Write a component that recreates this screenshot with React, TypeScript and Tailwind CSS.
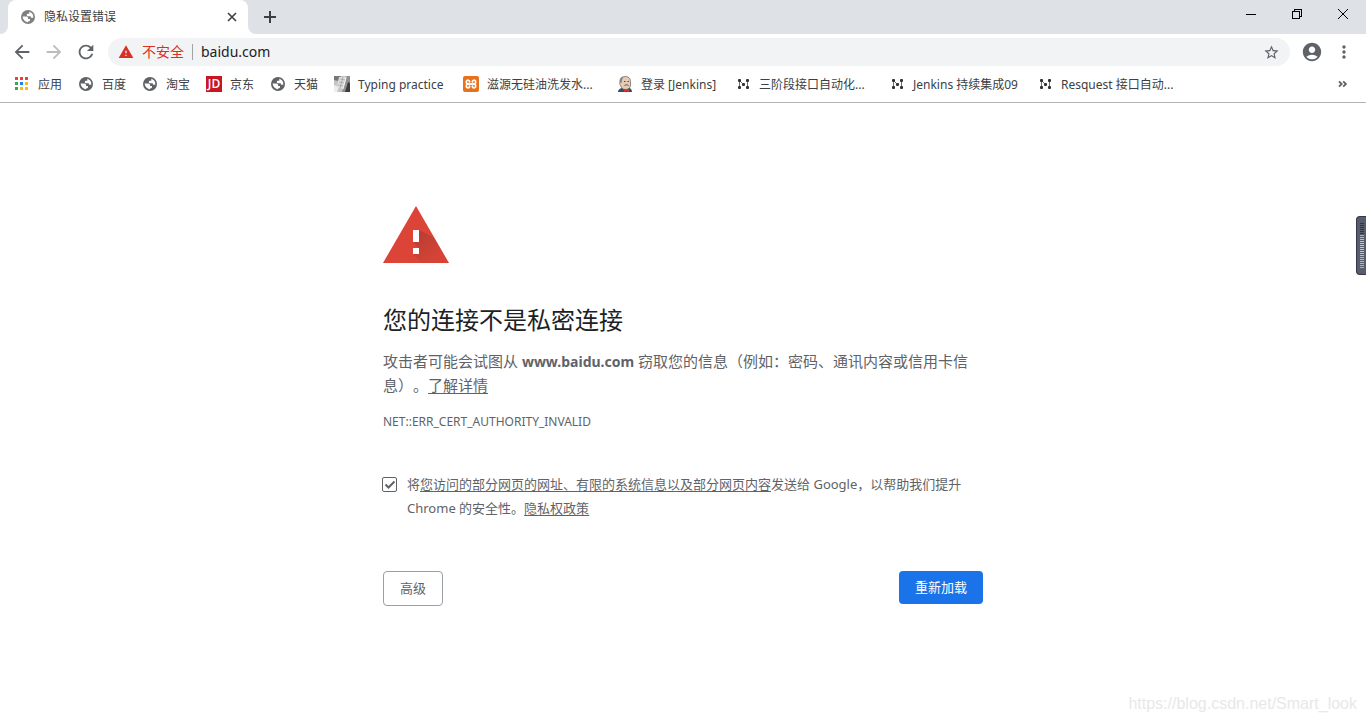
import type { ReactNode } from 'react';
import {
  MdAccountCircle,
  MdArrowBack,
  MdArrowForward,
  MdMoreVert,
  MdRefresh,
  MdStarBorder,
  MdWarning,
} from 'react-icons/md';

function Globe({ className }: { className: string }) {
  return (
    <svg viewBox="0 0 16 16" className={className} aria-hidden="true">
      <circle cx="8" cy="8" r="7" fill="currentColor" />
      <path
        d="M2.700 7.600h3.300c1.400 0 2.100.6 2.100 1.600v.7h1c.8 0 1 .5 1 1 0 .9-.8 1.200-1.700 1.300l-.5 1c-2.800-.2-5.200-2.700-5.200-5.600z"
        fill="#fff"
      />
      <path
        d="M9.300 2.800c2.300.5 4 2.600 4 5 0 .4 0 .7-.1 1h-1.400c-.7 0-1-.4-1-1v-.5H8.800c-1.200 0-2-.5-2-1.300 0-.9.6-1.300 1.500-1.300h1z"
        fill="#fff"
      />
    </svg>
  );
}

function Apps() {
  const colors = ['#ea4335', '#ea4335', '#ea4335', '#34a853', '#1a83f0', '#fbbc05', '#34a853', '#fbbc05', '#fbbc05'];
  return (
    <svg viewBox="0 0 16 16" className="size-4" shapeRendering="crispEdges" aria-hidden="true">
      {colors.map((c, i) => (
        <rect key={i} x={1 + (i % 3) * 5} y={1 + Math.floor(i / 3) * 5} width="3" height="3" fill={c} />
      ))}
    </svg>
  );
}

function JdIcon() {
  return (
    <span className="grid size-4 place-items-center bg-[#c81623] font-['Open_Sans','Noto_Sans',sans-serif] text-[12px] leading-4 font-semibold text-white">
      JD
    </span>
  );
}

function KeyboardIcon() {
  return (
    <svg viewBox="0 0 16 16" className="size-4" aria-hidden="true">
      <rect width="16" height="16" fill="#c4c4c4" />
      <path d="M0 0h7L4 5 0 4z" fill="#777" />
      <path d="M0 16V9l5 2-2 5z" fill="#ededed" />
      <path d="M5 1h7l-3 12-6-2z" fill="#dedede" />
      <path d="M6 3l5 1M5 6l5 1M4 9l5 1M9 1 6 12" stroke="#9c9c9c" strokeWidth=".7" />
      <path d="M13 0h3v7l-4 9h-4z" fill="#8f8f8f" />
      <path d="M14 6l2 1v9h-5z" fill="#3c3c3c" />
      <path d="M12 2l-3 11" stroke="#f5f5f5" />
    </svg>
  );
}

function XamppIcon() {
  return (
    <svg viewBox="0 0 16 16" className="size-4" aria-hidden="true">
      <rect width="16" height="16" rx="2" fill="#e8711c" />
      <g fill="none" stroke="#fff" strokeWidth="1.700" strokeLinecap="round">
        <path d="M6.600 6C6.800 4 3.300 3.300 3.300 5.900 3.300 7.200 4.300 8 5.500 8h5c1.200 0 2.200-.8 2.200-2.100C12.700 3.300 9.200 4 9.400 6" />
        <path d="M6.600 10c.2 2-3.300 2.700-3.300.1C3.300 8.800 4.300 8 5.500 8h5c1.200 0 2.200.8 2.200 2.100 0 2.600-3.500 1.900-3.300-.1" />
      </g>
    </svg>
  );
}

function JenkinsIcon() {
  return (
    <svg viewBox="0 0 16 16" className="size-4" aria-hidden="true">
      <path d="M1 16c0-2 1.500-3.500 4-4l6-.5c2.500.5 4 2 4 4.500z" fill="#335061" />
      <path d="M3 5C3 2 5 .5 8.300.5c3.500 0 5.200 2 5.200 5v3.500c0 2.500-2 4.500-5 4.500S4 11.500 3.500 9C2.300 8.500 2.500 7 3 6.500z" fill="#e5cbb5" stroke="#6b5f58" strokeWidth=".7" />
      <path d="M2.700 6.500C2.500 3 4 1 6.500.7L5 4l-.5 3z" fill="#8a837b" />
      <path d="M7 5.500h1.500M10.500 5.500H12M7.500 9.500c1.500-1 3-.8 4 .1" stroke="#4b3b34" strokeWidth=".9" fill="none" />
      <path d="M7 13l2.500.8L12 13v3l-2.500-1L7 16z" fill="#d33833" />
    </svg>
  );
}

function NodesIcon() {
  return (
    <svg viewBox="0 0 16 16" className="size-4" fill="#333" aria-hidden="true">
      <path d="M4 4h1v8H4zM12 4h1v8h-1z" opacity=".7" />
      <rect x="3" y="3" width="3" height="3" rx="1" />
      <rect x="3" y="10" width="3" height="3" rx="1" />
      <rect x="11" y="3" width="3" height="3" rx="1" />
      <rect x="11" y="10" width="3" height="3" rx="1" />
      <rect x="7" y="7" width="3" height="3" rx="1" />
      <path d="M5 5l2.500 2.500" stroke="#333" strokeWidth=".7" />
    </svg>
  );
}

const bookmarks: { label: string; icon: ReactNode; width: string }[] = [
  { label: '应用', icon: <Apps />, width: 'w-12' },
  { label: '百度', icon: <Globe className="size-4 text-[#5f6368]" />, width: 'w-12' },
  { label: '淘宝', icon: <Globe className="size-4 text-[#5f6368]" />, width: 'w-12' },
  { label: '京东', icon: <JdIcon />, width: 'w-12' },
  { label: '天猫', icon: <Globe className="size-4 text-[#5f6368]" />, width: 'w-12' },
  { label: 'Typing practice', icon: <KeyboardIcon />, width: 'w-[113px]' },
  { label: '滋源无硅油洗发水...', icon: <XamppIcon />, width: 'w-[138px]' },
  { label: '登录 [Jenkins]', icon: <JenkinsIcon />, width: 'w-[102px]' },
  { label: '三阶段接口自动化...', icon: <NodesIcon />, width: 'w-[138px]' },
  { label: 'Jenkins 持续集成09', icon: <NodesIcon />, width: 'w-[132px]' },
  { label: 'Resquest 接口自动...', icon: <NodesIcon />, width: 'w-[138px]' },
];

function TabStrip() {
  return (
    <header className="flex h-[34px] items-stretch bg-[#dee1e6] text-[#3c4043]">
      <div className="w-2 bg-white">
        <div className="h-full rounded-br-lg bg-[#dee1e6]" />
      </div>
      <div className="flex w-60 items-center rounded-t-lg bg-white pr-2 pl-3">
        <Globe className="size-4 text-[#808080]" />
        <span className="ml-2 flex-1 text-[12px] leading-4">隐私设置错误</span>
        <button aria-label="关闭标签页" className="grid size-4 place-items-center">
          <svg viewBox="0 0 16 16" className="size-4" stroke="#3c4043" strokeWidth="1.600">
            <path d="M4 4l8 8M12 4l-8 8" />
          </svg>
        </button>
      </div>
      <div className="w-2 bg-white">
        <div className="h-full rounded-bl-lg bg-[#dee1e6]" />
      </div>
      <button aria-label="新标签页" className="grid w-7 place-items-center">
        <svg viewBox="0 0 16 16" className="size-4" stroke="#3c4043" strokeWidth="2">
          <path d="M2 8h12M8 2v12" />
        </svg>
      </button>
      <div className="ml-auto flex h-7 text-black">
        <button aria-label="最小化" className="grid w-[46px] place-items-center">
          <svg viewBox="0 0 10 10" className="size-[10px]" stroke="currentColor" shapeRendering="crispEdges">
            <path d="M0 5.500h10" />
          </svg>
        </button>
        <button aria-label="还原" className="grid w-[46px] place-items-center">
          <svg viewBox="0 0 10 10" className="size-[10px]" fill="none" stroke="currentColor" shapeRendering="crispEdges">
            <path d="M.5 2.500h7v7h-7zM2.500 2.500v-2h7v7h-2" />
          </svg>
        </button>
        <button aria-label="关闭" className="grid w-[46px] place-items-center">
          <svg viewBox="0 0 10 10" className="size-[10px]" stroke="currentColor">
            <path d="M0 0l10 10M10 0 0 10" />
          </svg>
        </button>
      </div>
    </header>
  );
}

function Toolbar() {
  return (
    <div className="flex h-9 items-center bg-white pr-3 pl-[11px] text-[#5f6368]">
      <button aria-label="后退" className="mr-[10px]">
        <MdArrowBack className="size-[22px]" />
      </button>
      <button aria-label="前进" className="mr-[10px] text-[#babcbe]">
        <MdArrowForward className="size-[22px]" />
      </button>
      <button aria-label="重新加载此页" className="mr-[11px]">
        <MdRefresh className="size-[22px]" />
      </button>
      <div className="flex h-7 flex-1 items-center rounded-full bg-[#f1f3f4] pr-[10px] pl-[10px]">
        <MdWarning className="size-4 text-[#d93025]" />
        <span className="ml-2 text-[14px] leading-5 text-[#d93025]">不安全</span>
        <span className="mx-2 h-4 w-px bg-[#a0a4a8]" />
        <input
          aria-label="地址"
          defaultValue="baidu.com"
          className="min-w-0 flex-1 bg-transparent text-[14px] leading-5 text-[#202124] outline-none"
        />
        <button aria-label="为此网页添加书签">
          <MdStarBorder className="size-[17px]" />
        </button>
      </div>
      <button aria-label="用户" className="ml-[11px]">
        <MdAccountCircle className="size-[22px]" />
      </button>
      <button aria-label="菜单" className="ml-[11px]">
        <MdMoreVert className="size-5" />
      </button>
    </div>
  );
}

function BookmarksBar() {
  return (
    <nav className="flex h-[33px] items-start border-b border-[#b4b4b4] bg-white pr-[14px] pl-[14px] text-[12px] text-[#3c4043]">
      <div className="flex flex-1 gap-4 overflow-hidden pt-[6px]">
        {bookmarks.map((b) => (
          <a key={b.label} href="#" className={`flex shrink-0 items-start gap-2 whitespace-nowrap leading-[18px] ${b.width}`}>
            <span className="shrink-0">{b.icon}</span>
            {b.label}
          </a>
        ))}
      </div>
      <button aria-label="更多书签" className="mt-[6px] grid size-4 place-items-center">
        <svg viewBox="0 0 16 16" className="size-4" fill="none" stroke="#5f6368" strokeWidth="1.800">
          <path d="M3 5.300 5.700 8 3 10.700M7.200 5.300 9.900 8l-2.700 2.700" />
        </svg>
      </button>
    </nav>
  );
}

function WarningTriangle() {
  return (
    <svg viewBox="0 0 66 57" className="h-[57px] w-[66px]" aria-hidden="true">
      <defs>
        <linearGradient id="cast" x1="30" y1="26" x2="52" y2="52" gradientUnits="userSpaceOnUse">
          <stop offset="0" stopColor="#3e2723" stopOpacity=".25" />
          <stop offset="1" stopColor="#3e2723" stopOpacity="0.03" />
        </linearGradient>
      </defs>
      <path d="M33 0l33 57H0z" fill="#db4437" />
      <path d="M36 24l15.500 8L66 57H39l-9-9 6-6-6-6z" fill="url(#cast)" />
      <path d="M30 24h6v12h-6zM30 42h6v6h-6z" fill="#fff" />
    </svg>
  );
}

function LevelMeter() {
  const bars = [
    '#34363f', '#34363f', '#34363f', '#34363f', '#34363f', '#34363f',
    '#f0a63c', '#efb23f', '#eebf43', '#e8c946', '#e2d24a', '#dcdb4e', '#d0de55', '#c0df5c', '#b0e065',
    '#a0e06f', '#90e07b', '#84e088', '#78e096', '#6ce0a5', '#60e0b4', '#58dfc0', '#50dfcb',
  ];
  return (
    <div className="absolute top-[216px] right-0 h-[59px] w-[10px] rounded-l-sm border border-r-0 border-[#343945] bg-[#575d6b] pt-1 pl-[3px]">
      <svg viewBox="0 0 4 50" className="h-[50px] w-1" shapeRendering="crispEdges" aria-hidden="true">
        {bars.map((c, i) => (
          <rect key={i} y={2 + i * 2} width="4" height="1" fill={c} />
        ))}
      </svg>
    </div>
  );
}

export default function App() {
  return (
    <div
      lang="zh-CN"
      className="relative flex min-h-screen flex-col bg-white font-['Noto_Sans','Noto_Sans_CJK_SC',sans-serif] [text-spacing-trim:space-all]"
    >
      <TabStrip />
      <Toolbar />
      <BookmarksBar />
      <main className="mx-auto w-full max-w-[600px] flex-1 pt-[103px] text-[#5f6368]">
        <WarningTriangle />
        <h1 className="mt-[41px] text-[24px] leading-8 font-normal text-[#202124]">您的连接不是私密连接</h1>
        <p className="mt-[13px] text-[15px] leading-6">
          攻击者可能会试图从 <strong className="text-[14px] leading-none font-bold">www.baidu.com</strong>{' '}
          窃取您的信息（例如：密码、通讯内容或信用卡信息）。
          <a href="#" className="underline underline-offset-2">了解详情</a>
        </p>
        <p className="mt-[13px] text-[12px] leading-6">NET::ERR_CERT_AUTHORITY_INVALID</p>
        <div className="mt-[38px] flex gap-[10px]">
          <span className="relative mt-[5px] -ml-px size-[15px] shrink-0">
            <input
              id="report"
              type="checkbox"
              defaultChecked
              className="peer block size-[15px] appearance-none rounded-xs border border-[#5f6368] bg-white"
            />
            <svg
              viewBox="0 0 15 15"
              className="pointer-events-none absolute inset-0 hidden size-[15px] peer-checked:block"
              fill="none"
              stroke="#5f6368"
              strokeWidth="2"
              aria-hidden="true"
            >
              <path d="M3.500 7.500l3 3 6-6" />
            </svg>
          </span>
          <label htmlFor="report" className="text-[13px] leading-6">
            将<a href="#" className="underline underline-offset-2">您访问的部分网页的网址、有限的系统信息以及部分网页内容</a>发送给 Google，以帮助我们提升
            Chrome 的安全性。<a href="#" className="underline underline-offset-2">隐私权政策</a>
          </label>
        </div>
        <div className="mt-[51px] flex items-start justify-between text-[13px] leading-[17px]">
          <button className="rounded border border-[#9aa0a6] px-4 py-2">高级</button>
          <button className="rounded bg-[#1a73e8] px-4 py-2 text-white">重新加载</button>
        </div>
      </main>
      <LevelMeter />
      <div className="absolute right-[9px] bottom-2 font-['Liberation_Sans',sans-serif] text-[16px] leading-5 text-[#e8e8e8]">
        https://blog.csdn.net/Smart_look
      </div>
    </div>
  );
}
